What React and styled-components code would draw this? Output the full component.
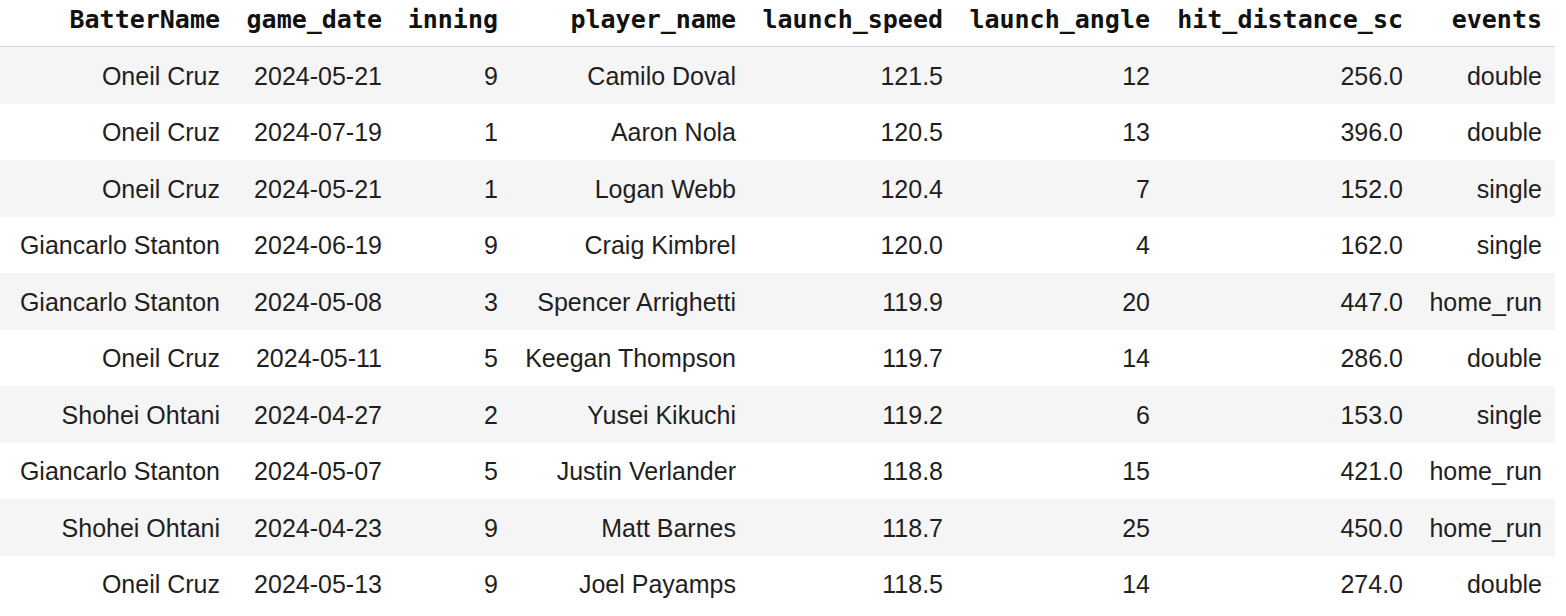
import React from "react";
import styled, { createGlobalStyle } from "styled-components";

const GlobalStyle = createGlobalStyle`
  html, body {
    margin: 0;
    padding: 0;
    background: #ffffff;
  }
`;

const columns = [
  { key: "BatterName", width: "233px" },
  { key: "game_date", width: "162px" },
  { key: "inning", width: "116px" },
  { key: "player_name", width: "238px" },
  { key: "launch_speed", width: "207px" },
  { key: "launch_angle", width: "207px" },
  { key: "hit_distance_sc", width: "253px" },
  { key: "events", width: "139px" },
];

const rows = [
  ["Oneil Cruz", "2024-05-21", "9", "Camilo Doval", "121.5", "12", "256.0", "double"],
  ["Oneil Cruz", "2024-07-19", "1", "Aaron Nola", "120.5", "13", "396.0", "double"],
  ["Oneil Cruz", "2024-05-21", "1", "Logan Webb", "120.4", "7", "152.0", "single"],
  ["Giancarlo Stanton", "2024-06-19", "9", "Craig Kimbrel", "120.0", "4", "162.0", "single"],
  ["Giancarlo Stanton", "2024-05-08", "3", "Spencer Arrighetti", "119.9", "20", "447.0", "home_run"],
  ["Oneil Cruz", "2024-05-11", "5", "Keegan Thompson", "119.7", "14", "286.0", "double"],
  ["Shohei Ohtani", "2024-04-27", "2", "Yusei Kikuchi", "119.2", "6", "153.0", "single"],
  ["Giancarlo Stanton", "2024-05-07", "5", "Justin Verlander", "118.8", "15", "421.0", "home_run"],
  ["Shohei Ohtani", "2024-04-23", "9", "Matt Barnes", "118.7", "25", "450.0", "home_run"],
  ["Oneil Cruz", "2024-05-13", "9", "Joel Payamps", "118.5", "14", "274.0", "double"],
];

const gridTemplate = columns.map((c) => c.width).join(" ");

const Table = styled.div`
  width: 1555px;
  display: flex;
  flex-direction: column;
`;

const HeaderRow = styled.div`
  display: grid;
  grid-template-columns: ${gridTemplate};
  height: 46px;
  border-bottom: 1.5px solid #d6d6d6;
  align-items: center;
`;

const HeaderCell = styled.div`
  text-align: right;
  padding-right: 13px;
  font-family: "DejaVu Sans Mono", "Liberation Mono", monospace;
  font-weight: bold;
  font-size: 25px;
  color: #111;
  white-space: nowrap;
  padding-bottom: 8px;
`;

const Row = styled.div`
  display: grid;
  grid-template-columns: ${gridTemplate};
  height: 56.5px;
  align-items: center;
  background: ${(p) => (p.$striped ? "#f5f5f5" : "#ffffff")};
`;

const Cell = styled.div`
  text-align: right;
  padding-right: 13px;
  padding-top: 2px;
  font-family: "Liberation Sans", Arial, sans-serif;
  font-size: 25px;
  color: #1f1f1f;
  white-space: nowrap;
`;

export default function App() {
  return (
    <>
      <GlobalStyle />
      <Table>
        <HeaderRow>
          {columns.map((c) => (
            <HeaderCell key={c.key}>{c.key}</HeaderCell>
          ))}
        </HeaderRow>
        {rows.map((r, i) => (
          <Row key={i} $striped={i % 2 === 0}>
            {r.map((v, j) => (
              <Cell key={j}>{v}</Cell>
            ))}
          </Row>
        ))}
      </Table>
    </>
  );
}
